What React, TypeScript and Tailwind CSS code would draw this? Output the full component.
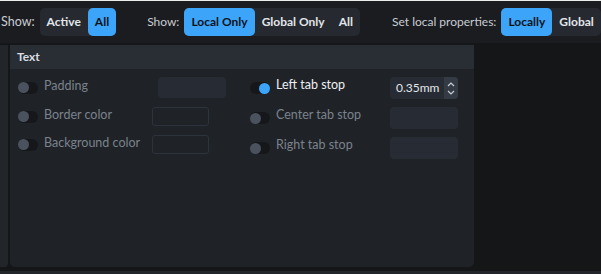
import React from "react";

const font = { fontFamily: "Lato, 'Noto Sans', sans-serif" };

function Segment({ items, active }: { items: string[]; active: string }) {
  return (
    <div className="flex h-[28px] shrink-0 rounded-[5px] bg-[#262a30]">
      {items.map((item) => (
        <div
          key={item}
          className={
            item === active
              ? "flex shrink-0 items-center whitespace-nowrap rounded-[5px] bg-[#3da5f9] px-[7px] text-[12px] font-bold text-[#0e1218]"
              : "flex shrink-0 items-center whitespace-nowrap px-[7px] text-[12px] font-bold text-[#e2e5ea]"
          }
        >
          {item}
        </div>
      ))}
    </div>
  );
}

function Toggle({ on }: { on?: boolean }) {
  return (
    <div className={`flex h-[12px] w-[20px] shrink-0 items-center rounded-full bg-[#15171a] ${on ? "justify-end" : "justify-start"}`}>
      <div className={`h-[11px] w-[11px] rounded-full ${on ? "bg-[#3da5f9]" : "bg-[#4a525e]"}`} />
    </div>
  );
}

function Row({ label, on, labelW, lift, children }: { label: string; on?: boolean; labelW: string; lift: string; children: React.ReactNode }) {
  return (
    <div className="flex items-center">
      <Toggle on={on} />
      <div className={`ml-[6px] ${labelW} ${lift} whitespace-nowrap text-[12.5px] leading-[16px] ${on ? "text-[#eef0f3]" : "text-[#7b828b]"}`}>{label}</div>
      {children}
    </div>
  );
}

export default function App() {
  return (
    <div className="flex h-[274px] w-[601px] flex-col overflow-hidden bg-[#151618]" style={font}>
      <div className="h-px bg-[#ececec]" />
      <div className="flex h-[42px] items-center overflow-hidden bg-[#1a1c20]">
        <span className="ml-px mr-[5px] shrink-0 text-[12.5px] text-[#c9cdd3]">Show:</span>
        <Segment items={["Active", "All"]} active="All" />
        <span className="ml-[31px] mr-[5px] shrink-0 text-[12px] text-[#c9cdd3]">Show:</span>
        <Segment items={["Local Only", "Global Only", "All"]} active="Local Only" />
        <span className="ml-[32px] mr-[5px] shrink-0 whitespace-nowrap text-[12px] text-[#c9cdd3]">Set local properties:</span>
        <Segment items={["Locally", "Global"]} active="Locally" />
      </div>
      <div className="flex flex-1 pt-[2px] pb-[4px]">
        <div className="w-[8px] rounded-br-[4px] bg-[#22262b]" />
        <div className="ml-[2px] flex w-[464px] flex-col overflow-hidden rounded-b-[5px] bg-[#1f2328]">
          <div className="flex h-[24px] items-center bg-[#292e35] pl-[7px] text-[12px] font-bold text-[#d9dde2]">Text</div>
          <div className="flex pt-[8px] pl-[8px]">
            <div className="flex w-[232px] flex-col">
              <Row label="Padding" labelW="w-[114px]" lift="mb-[3px]">
                <div className="h-[21px] w-[68px] rounded-[4px] bg-[#272c34]" />
              </Row>
              <div className="mt-[9px]">
                <Row label="Border color" labelW="w-[108px]" lift="mb-[3px]">
                  <div className="h-[19px] w-[57px] rounded-[3px] border border-[#2d333c]" />
                </Row>
              </div>
              <div className="mt-[9px]">
                <Row label="Background color" labelW="w-[108px]" lift="mb-[3px]">
                  <div className="h-[19px] w-[57px] rounded-[3px] border border-[#2d333c]" />
                </Row>
              </div>
            </div>
            <div className="flex flex-col gap-[8px]">
              <Row label="Left tab stop" on labelW="w-[114px]" lift="mb-[6px]">
                <div className="flex h-[22px] w-[68px] overflow-hidden rounded-[4px] bg-[#272c34]">
                  <div className="flex flex-1 items-center pl-[6px] pb-px text-[12px] text-[#e3e6ea]">0.35mm</div>
                  <div className="flex w-[14px] flex-col items-center justify-center gap-[3px] bg-[#343b45]">
                    <svg width="8" height="5" viewBox="0 0 8 5"><path d="M1 4 L4 1 L7 4" fill="none" stroke="#c9cdd3" strokeWidth="1.2" /></svg>
                    <svg width="8" height="5" viewBox="0 0 8 5"><path d="M1 1 L4 4 L7 1" fill="none" stroke="#c9cdd3" strokeWidth="1.2" /></svg>
                  </div>
                </div>
              </Row>
              <Row label="Center tab stop" labelW="w-[114px]" lift="mb-[6px]">
                <div className="h-[22px] w-[68px] rounded-[4px] bg-[#272c34]" />
              </Row>
              <Row label="Right tab stop" labelW="w-[114px]" lift="mb-[6px]">
                <div className="h-[22px] w-[68px] rounded-[4px] bg-[#272c34]" />
              </Row>
            </div>
          </div>
        </div>
      </div>
      <div className="h-[3px] bg-[#22262b]" />
    </div>
  );
}
